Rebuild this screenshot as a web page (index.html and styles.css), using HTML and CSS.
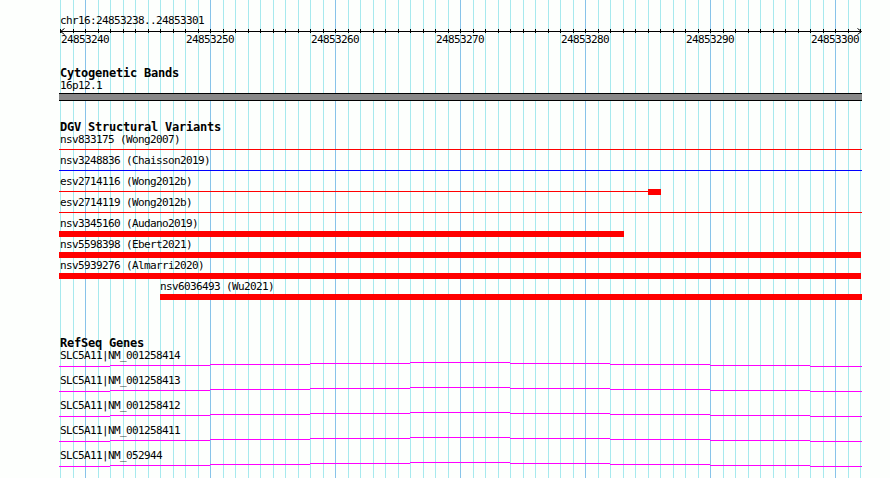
FILE: index.html
```html
<!DOCTYPE html>
<html lang="en">
<head>
    <meta charset="UTF-8">
    <title>chr16:24853238..24853301</title>
    <link rel="stylesheet" href="styles.css">
</head>
<body>

    <div class="panel">
        <div class="ruler">
            <div class="label">chr16:24853238..24853301</div>
            <svg class="axis" width="802" height="7" viewBox="0 0 802 7">
                <defs>
                    <pattern id="ticks" width="25" height="7" patternUnits="userSpaceOnUse">
                        <rect x="0" y="1" width="1" height="4" />
                        <rect x="13" y="1" width="1" height="4" />
                    </pattern>
                </defs>
                <rect class="crisp" x="0" y="0" width="801" height="7" fill="url(#ticks)" />
                <rect class="crisp" x="0" y="3" width="801" height="1" />
                <polyline points="4.5,0.5 0.5,3.5 4.5,6.5" />
                <polyline points="797.5,0.5 801.5,3.5 797.5,6.5" />
            </svg>
            <div class="ruler-numbers">
                <span>24853240</span>
                <span>24853250</span>
                <span>24853260</span>
                <span>24853270</span>
                <span>24853280</span>
                <span>24853290</span>
                <span>24853300</span>
            </div>
        </div>

        <section class="track track-cyto">
            <h2 class="track-title">Cytogenetic Bands</h2>
            <div class="label">16p12.1</div>
            <div class="band"></div>
        </section>

        <section class="track track-dgv">
            <h2 class="track-title">DGV Structural Variants</h2>
            <div class="feature">
                <div class="label">nsv833175 (Wong2007)</div>
                <div class="glyph"><div class="span loss" style="margin-left:-1px;width:803px"></div></div>
            </div>
            <div class="feature">
                <div class="label">nsv3248836 (Chaisson2019)</div>
                <div class="glyph"><div class="span gain" style="margin-left:-1px;width:803px"></div></div>
            </div>
            <div class="feature">
                <div class="label">esv2714116 (Wong2012b)</div>
                <div class="glyph">
                    <div class="span loss" style="margin-left:-1px;width:589px"></div>
                    <div class="bar" style="width:13px"></div>
                </div>
            </div>
            <div class="feature">
                <div class="label">esv2714119 (Wong2012b)</div>
                <div class="glyph"><div class="span loss" style="margin-left:-1px;width:803px"></div></div>
            </div>
            <div class="feature">
                <div class="label">nsv3345160 (Audano2019)</div>
                <div class="glyph"><div class="bar" style="margin-left:-1px;width:565px"></div></div>
            </div>
            <div class="feature">
                <div class="label">nsv5598398 (Ebert2021)</div>
                <div class="glyph"><div class="bar" style="margin-left:-1px;width:802px"></div></div>
            </div>
            <div class="feature">
                <div class="label">nsv5939276 (Almarri2020)</div>
                <div class="glyph"><div class="bar" style="margin-left:-1px;width:802px"></div></div>
            </div>
            <div class="feature">
                <div class="label" style="margin-left:100px">nsv6036493 (Wu2021)</div>
                <div class="glyph"><div class="bar" style="margin-left:100px;width:702px"></div></div>
            </div>
        </section>

        <section class="track track-genes">
            <h2 class="track-title">RefSeq Genes</h2>
            <div class="gene">
                <div class="label">SLC5A11|NM_001258414</div>
                <svg class="hat" width="803" height="5" viewBox="0 0 803 5"><path d="M0 4.5H51M51 3.5H151M151 2.5H251M251 1.5H351M351 0.5H451M451 1.5H551M551 2.5H651M651 3.5H751M751 4.5H803" /></svg>
            </div>
            <div class="gene">
                <div class="label">SLC5A11|NM_001258413</div>
                <svg class="hat" width="803" height="5" viewBox="0 0 803 5"><path d="M0 4.5H51M51 3.5H151M151 2.5H251M251 1.5H351M351 0.5H451M451 1.5H551M551 2.5H651M651 3.5H751M751 4.5H803" /></svg>
            </div>
            <div class="gene">
                <div class="label">SLC5A11|NM_001258412</div>
                <svg class="hat" width="803" height="5" viewBox="0 0 803 5"><path d="M0 4.5H51M51 3.5H151M151 2.5H251M251 1.5H351M351 0.5H451M451 1.5H551M551 2.5H651M651 3.5H751M751 4.5H803" /></svg>
            </div>
            <div class="gene">
                <div class="label">SLC5A11|NM_001258411</div>
                <svg class="hat" width="803" height="5" viewBox="0 0 803 5"><path d="M0 4.5H51M51 3.5H151M151 2.5H251M251 1.5H351M351 0.5H451M451 1.5H551M551 2.5H651M651 3.5H751M751 4.5H803" /></svg>
            </div>
            <div class="gene">
                <div class="label">SLC5A11|NM_052944</div>
                <svg class="hat" width="803" height="5" viewBox="0 0 803 5"><path d="M0 4.5H51M51 3.5H151M151 2.5H251M251 1.5H351M351 0.5H451M451 1.5H551M551 2.5H651M651 3.5H751M751 4.5H803" /></svg>
            </div>
        </section>
    </div>

</body>
</html>
```

FILE: styles.css
```css
body {
    margin: 0;
    background-color: #fdfffd;
    color: #000;
    font-family: "DejaVu Sans Mono", "Liberation Mono", monospace;
    font-size: 11px;
    letter-spacing: -0.62px;
    line-height: 11px;
}
.panel {
    box-sizing: border-box;
    width: 801px;
    height: 478px;
    margin-left: 60px;
    padding-top: 15px;
    background-color: #fdfffd;
    background-image:
        repeating-linear-gradient(to right, transparent 0 25px, #87c3e9 25px 26px, transparent 26px 125px),
        repeating-linear-gradient(to right, #a6e9ee 0 1px, transparent 1px 13px, #a6e9ee 13px 14px, transparent 14px 25px);
}
.label {
    height: 11px;
    white-space: pre;
}

/* ruler */
.axis {
    display: block;
    margin-top: 2px;
    overflow: visible;
}
.axis polyline {
    fill: none;
    stroke: #000;
    stroke-width: 1;
}
.crisp {
    shape-rendering: crispEdges;
}
.ruler-numbers {
    display: flex;
    gap: 77px;
    height: 11px;
    margin-top: -1px;
    padding-left: 1px;
}
.ruler-numbers span {
    flex: none;
    width: 48px;
    white-space: nowrap;
}

/* tracks */
.track-title {
    margin: 0;
    height: 13px;
    font-size: 12px;
    letter-spacing: -0.22px;
    line-height: 13px;
    font-weight: bold;
}
.track-cyto {
    margin-top: 22px;
}
.track-dgv {
    margin-top: 20px;
}
.track-genes {
    margin-top: 35px;
}
.band {
    width: 803px;
    height: 6px;
    margin: 2px 0 0 -1px;
    background-color: #888;
    border-top: 1px solid #000;
    border-bottom: 1px solid #000;
}

.feature {
    height: 21px;
}
.glyph {
    display: flex;
    align-items: flex-start;
    height: 6px;
    margin-top: 2px;
}
.span {
    flex: none;
    height: 1px;
    margin-top: 2px;
}
.loss {
    background-color: #f00;
}
.gain {
    background-color: #00f;
}
.bar {
    flex: none;
    height: 6px;
    background-color: #f00;
}

.gene {
    height: 25px;
}
.hat {
    display: block;
    margin: 1px 0 0 -1px;
}
.hat path {
    fill: none;
    stroke: #f0f;
    stroke-width: 1;
    shape-rendering: crispEdges;
}
```
